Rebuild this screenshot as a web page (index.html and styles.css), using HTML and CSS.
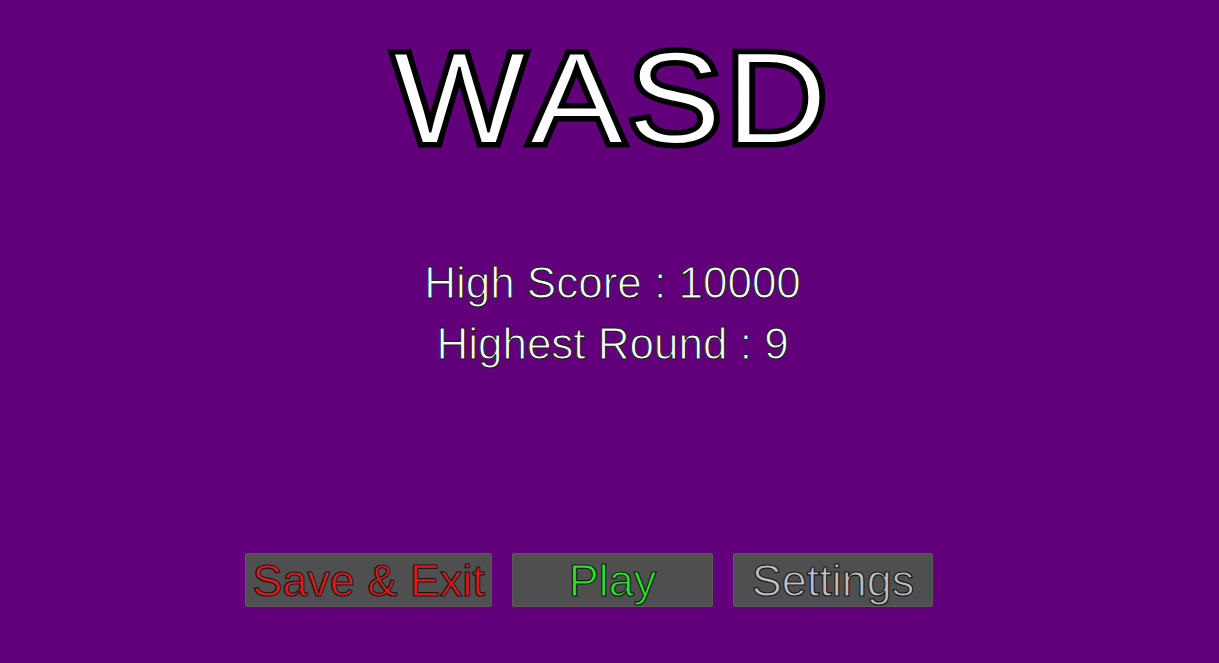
FILE: index.html
```html
<!DOCTYPE html>
<html lang="en">
<head>
<meta charset="utf-8">
<title>WASD</title>
<link rel="stylesheet" href="styles.css">
</head>
<body>
<main class="screen">
  <h1 class="title" data-text="WASD">WASD</h1>
  <section class="stats">
    <p class="stat">High Score : 10000</p>
    <p class="stat">Highest Round : 9</p>
  </section>
  <nav class="menu">
    <button class="btn btn-exit">Save &amp; Exit</button>
    <button class="btn btn-play">Play</button>
    <button class="btn btn-settings">Settings</button>
  </nav>
</main>
</body>
</html>
```

FILE: styles.css
```css
* { box-sizing: border-box; }
html, body {
  margin: 0;
  padding: 0;
  height: 100%;
  background: #62007c;
}
.screen {
  height: 663px;
  display: flex;
  flex-direction: column;
  align-items: center;
  padding-top: 33px;
  font-family: "Liberation Sans", Arial, sans-serif;
}
.title {
  position: relative;
  margin: 0;
  padding-left: 4px;
  font-weight: 400;
  font-size: 130px;
  line-height: 130px;
  height: 130px;
  letter-spacing: 4px;
  font-kerning: none;
  color: #fff;
  -webkit-text-stroke: 2px #000;
  transform: scaleX(1.08);
}
.title::before {
  content: attr(data-text);
  position: absolute;
  left: 4px;
  top: 0;
  z-index: -1;
  color: #000;
  -webkit-text-stroke: 9px #000;
}
.stats {
  margin-top: 89px;
  display: flex;
  flex-direction: column;
  align-items: center;
}
.stat {
  margin: 0;
  font-size: 44px;
  line-height: 61px;
  color: #fff;
  -webkit-text-stroke: 1.1px #202020;
  padding-left: 6px;
}
.menu {
  margin-top: 179px;
  width: 100%;
  display: grid;
  grid-template-columns: 1fr auto 1fr;
  column-gap: 20px;
  padding-left: 6px;
}
.btn {
  height: 54px;
  padding: 1px 0 0;
  border: 1px solid #5b5b5b;
  border-radius: 2px;
  background: #4f4f4f;
  font-family: "Liberation Sans", Arial, sans-serif;
  font-size: 45px;
  line-height: 51px;
  -webkit-text-stroke: 1.2px #1a1a1a;
  cursor: pointer;
}
.btn-exit {
  width: 247px;
  justify-self: end;
  color: #e81818;
}
.btn-play {
  width: 201px;
  color: #26e626;
}
.btn-settings {
  width: 200px;
  justify-self: start;
  color: #c0c0c0;
}
```
